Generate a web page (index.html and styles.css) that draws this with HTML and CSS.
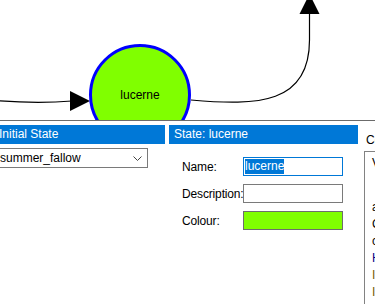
FILE: index.html
```html
<!DOCTYPE html>
<html lang="en">
<head>
    <meta charset="UTF-8">
    <meta name="viewport" content="width=device-width, initial-scale=1.0">
    <title>Crop Rotation - State Editor</title>
    <link rel="stylesheet" href="styles.css">
</head>
<body>
  <div class="canvas">
    <svg class="diagram" width="375" height="120" viewBox="0 0 375 120">
        <!-- incoming transition -->
        <path class="edge" d="M-40 97 C0 102 35 104 72 101"/>
        <polygon class="head" points="70,91 90,101 70,111"/>

        <!-- state node -->
        <circle class="node" cx="140" cy="95" r="49.5"/>
        <text class="node-label" x="140" y="99" text-anchor="middle">lucerne</text>

        <!-- outgoing transition -->
        <path class="edge" d="M191 100 C258 106 309.5 104 309.5 40 L309.5 14"/>
        <polygon class="head" points="299.5,14 309.5,-6 319.5,14"/>
    </svg>
  </div>

  <div class="editor">
    <section class="panel initial">
        <h3 class="panel-title">Initial State</h3>
        <div class="select">
            <span>summer_fallow</span>
            <svg class="chevron" width="9" height="5" viewBox="0 0 9 5">
                <path d="M0.5 0.5 L4.5 4.5 L8.5 0.5"/>
            </svg>
        </div>
    </section>

    <section class="panel state">
        <h3 class="panel-title">State: lucerne</h3>
        <div class="form">
            <label>Name:</label>
            <div class="field focused"><span class="selected">lucerne</span></div>

            <label>Description:</label>
            <div class="field"></div>

            <label>Colour:</label>
            <div class="field swatch"></div>
        </div>
    </section>

    <section class="panel comments">
        <div class="caption">Comments</div>
        <div class="notes">
            <p class="first">Version 2 of the rotation</p>
            <p>after fallow the paddock</p>
            <p>Carries stock over winter</p>
            <p>cut for hay in spring</p>
            <p class="keyword">Harvest: December</p>
            <p class="value">Irrigated</p>
            <p class="value">Inputs: lime, super</p>
        </div>
    </section>
  </div>
</body>
</html>
```

FILE: styles.css
```css
body{
    margin: 0;
    background: #fff;
    font-family: "Liberation Sans", Arial, sans-serif;
    font-size: 12px;
    color: #000;
    overflow: hidden;
    width: 375px;
    height: 304px;
}

.canvas{
    height: 120px;
    border-bottom: 1px solid #6b6b6b;
    overflow: hidden;
}

.diagram{
    display: block;
}

.edge{
    fill: none;
    stroke: #000;
    stroke-width: 1.2;
}

.head{
    fill: #000;
}

.node{
    fill: #80ff00;
    stroke: #0000ff;
    stroke-width: 3;
}

.node-label{
    font-family: "Liberation Sans", Arial, sans-serif;
    font-size: 12px;
    fill: #000;
}

.editor{
    display: flex;
    gap: 4px;
    margin-left: -6px;
    padding-top: 4px;
}

.panel{
    flex: none;
}

.panel-title{
    margin: 0;
    height: 19px;
    line-height: 19px;
    padding-left: 5px;
    background-color: #0078d7;
    color: white;
    font-size: 12px;
    font-weight: normal;
}

.initial{
    width: 171px;
}

.select{
    display: flex;
    align-items: center;
    justify-content: space-between;
    box-sizing: border-box;
    width: 152px;
    height: 20px;
    margin: 4px 0 0 2px;
    padding: 0 5px 0 3px;
    border: 1px solid #7a7a7a;
}

.chevron path{
    fill: none;
    stroke: #444;
    stroke-width: 1;
}

.state{
    width: 189px;
}

.form{
    display: grid;
    grid-template-columns: 61px 100px;
    grid-auto-rows: 19px;
    row-gap: 8px;
    margin-top: 13px;
    padding-left: 13px;
}

.form label{
    align-self: center;
    white-space: nowrap;
    letter-spacing: -0.15px;
}

.field{
    box-sizing: border-box;
    border: 1px solid #7a7a7a;
    padding: 1px;
    line-height: 15px;
}

.field.focused{
    border-color: #0078d7;
}

.selected{
    display: inline-block;
    background-color: #0078d7;
    color: white;
    height: 15px;
}

.swatch{
    background-color: #80ff00;
    border-color: #6d6d6d;
}

.comments{
    width: 120px;
    margin-left: 2px;
    padding-top: 8px;
    overflow: hidden;
}

.caption{
    line-height: 15px;
    padding-left: 2px;
}

.notes{
    margin-top: 3px;
    height: 160px;
    border-left: 1px solid #828282;
    border-top: 1px solid #828282;
    padding: 3px 0 0 7px;
    white-space: nowrap;
}

.notes p{
    margin: 0;
    line-height: 17px;
}

.notes .first{
    margin-bottom: 27px;
}

.keyword{
    color: #000080;
}

.value{
    color: #7a5c00;
}
```
